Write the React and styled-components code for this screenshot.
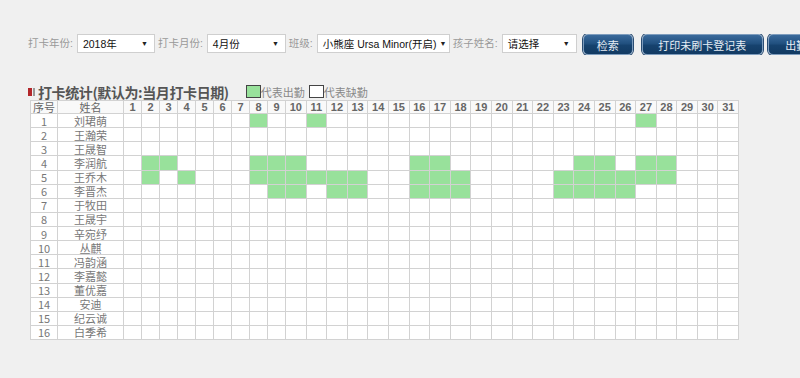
import styled, { createGlobalStyle } from "styled-components";

const GlobalStyle = createGlobalStyle`
  html, body {
    margin: 0;
    padding: 0;
    overflow: hidden;
    background: #f0f0f0;
  }
  body {
    font-family: "Liberation Sans", "Noto Sans CJK SC", sans-serif;
  }
`;

const Page = styled.div`
  padding: 34px 0 0 28px;
  width: 772px;
  height: 344px;
`;

const Toolbar = styled.div`
  display: flex;
  align-items: flex-start;
  white-space: nowrap;
  height: 21px;
  overflow: hidden;
`;

const Label = styled.span`
  font-size: 10.5px;
  color: #999;
  line-height: 19px;
  margin-left: ${({ $first }) => ($first ? "0" : "3px")};
  margin-right: 4px;
`;

const SelectBox = styled.div`
  display: flex;
  align-items: center;
  justify-content: space-between;
  box-sizing: border-box;
  width: ${({ $w }) => $w}px;
  height: 19px;
  background: #fff;
  border: 1px solid #cfcfcf;
  padding: 0 6px 0 5px;
  font-size: 10.5px;
  color: #111;
  flex-shrink: 0;
  white-space: nowrap;
  overflow: hidden;
`;

const Arrow = styled.span`
  font-size: 7px;
  color: #222;
  margin-left: 3px;
`;

const Button = styled.button`
  flex-shrink: 0;
  box-sizing: border-box;
  width: ${({ $w }) => $w}px;
  height: 21px;
  margin-left: ${({ $ml }) => $ml}px;
  padding: 0;
  border: 1px solid #7d9cbd;
  border-radius: 5px;
  background: linear-gradient(#3a6a9c 0%, #21507f 45%, #16426e 55%, #123a62 100%);
  box-shadow: 0 0 0 1px #2a4d73;
  color: #e6edf5;
  font-family: "Noto Sans CJK SC", sans-serif;
  font-size: 11px;
  text-align: center;
  white-space: nowrap;
  overflow: hidden;
`;

const TitleRow = styled.div`
  display: flex;
  align-items: center;
  height: 17px;
  margin-top: 28px;
`;

const Marker = styled.span`
  display: inline-block;
  width: 4px;
  height: 8px;
  background: #b3262a;
  border-right: 1px solid #f0f0f0;
  box-shadow: 2px 0 0 #999;
  margin-right: 5px;
`;

const Title = styled.span`
  font-family: "Noto Sans CJK SC", sans-serif;
  font-size: 14px;
  font-weight: bold;
  color: #555;
  letter-spacing: -0.4px;
  margin-right: 17px;
`;

const LegendBox = styled.span`
  display: inline-block;
  box-sizing: border-box;
  width: 15px;
  height: 13px;
  border: 1px solid #444;
  background: ${({ $on }) => ($on ? "#98e19b" : "#fff")};
`;

const LegendText = styled.span`
  font-family: "Noto Sans CJK SC", sans-serif;
  font-size: 11px;
  color: #888;
  margin-right: 4px;
`;

const Table = styled.table`
  margin-left: 2px;
  border-collapse: collapse;
  table-layout: fixed;
  width: 708px;
  background: #fff;
  border: 1px solid #c9c9c9;
`;

const HeadCell = styled.th`
  border: 1px solid #d2d2d2;
  padding: 0;
  height: 12px;
  background: #f9f9f9;
  font-size: 11px;
  font-family: ${({ $cjk }) =>
    $cjk ? '"Noto Sans CJK SC", sans-serif' : '"Liberation Sans", sans-serif'};
  font-weight: ${({ $cjk }) => ($cjk ? "normal" : "bold")};
  color: #666;
  line-height: 12px;
  text-align: center;
  overflow: hidden;
`;

const Cell = styled.td`
  border: 1px solid #d2d2d2;
  padding: 0;
  height: 13.13px;
  background: ${({ $on }) => ($on ? "#98e19b" : "#fff")};
  font-size: 11px;
  font-family: "Noto Sans CJK SC", sans-serif;
  color: #777;
  line-height: 12px;
  text-align: center;
  overflow: hidden;
`;

const students = [
  "刘珺萌", "王瀚荣", "王晟智", "李润航", "王乔木", "李晋杰", "于牧田", "王晟宇",
  "辛宛纾", "丛麒", "冯韵涵", "李嘉懿", "董优嘉", "安迪", "纪云诚", "白季希",
];

const present = {
  1: [8, 11, 27],
  4: [2, 3, 8, 9, 10, 16, 17, 24, 25, 27, 28],
  5: [2, 4, 8, 9, 10, 11, 12, 13, 16, 17, 18, 23, 24, 25, 26, 27, 28],
  6: [9, 10, 12, 13, 16, 17, 18, 23, 24, 25, 26],
};

const days = Array.from({ length: 31 }, (_, i) => i + 1);

const App = () => {
  return (
    <>
      <GlobalStyle />
      <Page>
        <Toolbar>
          <Label $first>打卡年份:</Label>
          <SelectBox $w={78}>
            <span>2018年</span>
            <Arrow>▼</Arrow>
          </SelectBox>
          <Label>打卡月份:</Label>
          <SelectBox $w={79}>
            <span>4月份</span>
            <Arrow>▼</Arrow>
          </SelectBox>
          <Label>班级:</Label>
          <SelectBox $w={133}>
            <span>小熊座 Ursa Minor(开启)</span>
            <Arrow>▼</Arrow>
          </SelectBox>
          <Label>孩子姓名:</Label>
          <SelectBox $w={75}>
            <span>请选择</span>
            <Arrow>▼</Arrow>
          </SelectBox>
          <Button $w={50} $ml={6}>检索</Button>
          <Button $w={121} $ml={9}>打印未刷卡登记表</Button>
          <Button $w={90} $ml={5}>出勤统计表</Button>
        </Toolbar>

        <TitleRow>
          <Marker />
          <Title>打卡统计(默认为:当月打卡日期)</Title>
          <LegendBox $on />
          <LegendText>代表出勤</LegendText>
          <LegendBox />
          <LegendText>代表缺勤</LegendText>
        </TitleRow>

        <Table>
          <colgroup>
            <col style={{ width: 27 }} />
            <col style={{ width: 66 }} />
            {days.map((d) => (
              <col key={d} style={{ width: d < 10 ? 18 : 20.6 }} />
            ))}
          </colgroup>
          <thead>
            <tr>
              <HeadCell $cjk>序号</HeadCell>
              <HeadCell $cjk>姓名</HeadCell>
              {days.map((d) => (
                <HeadCell key={d}>{d}</HeadCell>
              ))}
            </tr>
          </thead>
          <tbody>
            {students.map((name, i) => {
              const row = present[i + 1] || [];
              return (
                <tr key={name}>
                  <Cell>{i + 1}</Cell>
                  <Cell>{name}</Cell>
                  {days.map((d) => (
                    <Cell key={d} $on={row.includes(d)} />
                  ))}
                </tr>
              );
            })}
          </tbody>
        </Table>
      </Page>
    </>
  );
};

export default App;
